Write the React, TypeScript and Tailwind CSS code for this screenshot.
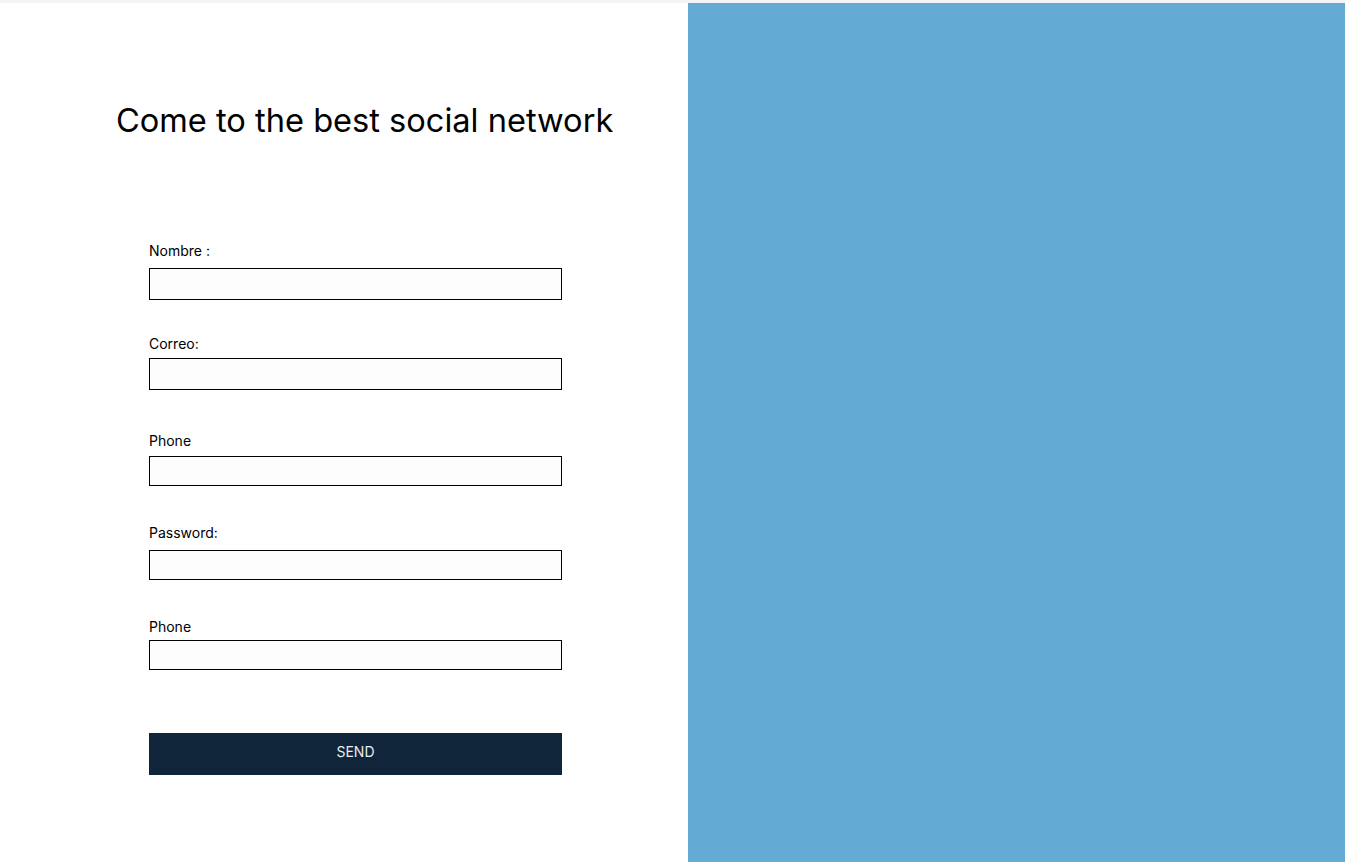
import React from 'react';

const fields = [
  { label: 'Nombre :', gapTop: 'mt-0', inputGap: 'mt-[7px]', h: 'h-8', type: 'text' },
  { label: 'Correo:', gapTop: 'mt-[33px]', inputGap: 'mt-[4px]', h: 'h-8', type: 'email' },
  { label: 'Phone', gapTop: 'mt-10', inputGap: 'mt-[5px]', h: 'h-[30px]', type: 'tel' },
  { label: 'Password:', gapTop: 'mt-9', inputGap: 'mt-[7px]', h: 'h-[30px]', type: 'password' },
  { label: 'Phone', gapTop: 'mt-9', inputGap: 'mt-[3px]', h: 'h-[30px]', type: 'tel' },
];

export default function App() {
  return (
    <div className="min-h-screen flex flex-col bg-white font-['Inter',sans-serif]">
      <div className="h-[3px] bg-[#f4f4f4]" />
      <div className="flex flex-1 h-[859px]">
        {/* Left: form */}
        <div className="w-[688px] shrink-0 bg-white">
          <h1 className="ml-[116px] mt-[98px] text-[32.6px] leading-[39px] text-black font-normal whitespace-nowrap">
            Come to the best social network
          </h1>

          <form className="ml-[149px] w-[413px] mt-[100px] flex flex-col" onSubmit={(e) => e.preventDefault()}>
            {fields.map((f, i) => (
              <div key={i} className={f.gapTop}>
                <label className="block text-sm leading-5 pt-px text-black">{f.label}</label>
                <input
                  type={f.type}
                  className={`${f.inputGap} ${f.h} block w-full border border-black bg-[#fdfdfd] outline-none px-2 text-sm`}
                />
              </div>
            ))}
            <button
              type="submit"
              className="mt-[63px] h-[42px] w-full bg-[#10253a] text-[#e8ecf0] text-sm pb-1"
            >
              SEND
            </button>
          </form>
        </div>

        {/* Right: blue panel */}
        <div className="flex-1 bg-[#63abd5]" />
      </div>
    </div>
  );
}
